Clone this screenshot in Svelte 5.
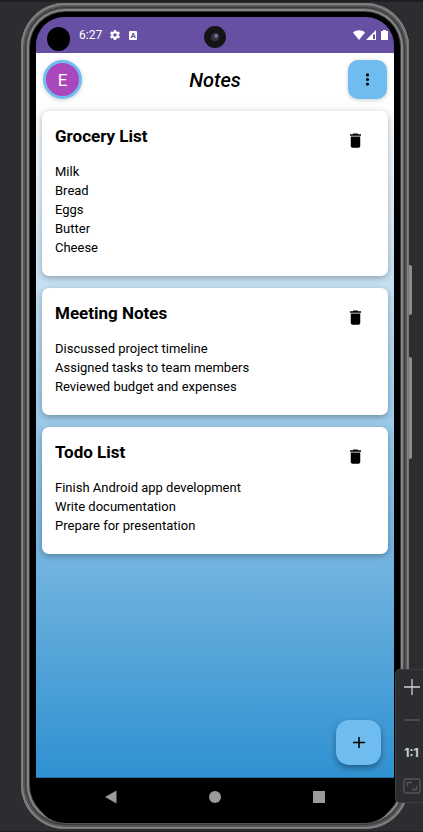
<script>
  let notes = $state([
    { title: 'Grocery List', lines: ['Milk', 'Bread', 'Eggs', 'Butter', 'Cheese'] },
    { title: 'Meeting Notes', lines: ['Discussed project timeline', 'Assigned tasks to team members', 'Reviewed budget and expenses'] },
    { title: 'Todo List', lines: ['Finish Android app development', 'Write documentation', 'Prepare for presentation'] }
  ]);

  function remove(index) {
    notes.splice(index, 1);
  }
</script>

<div class="stage">
  <div class="device">
    <span class="side power"></span>
    <span class="side volume"></span>
    <div class="screen">
      <div class="status">
        <span class="corner-lens"></span>
        <span class="time">6:27</span>
        <svg class="gear" viewBox="0 0 24 24" width="12" height="12" aria-hidden="true">
          <path fill="#fff" fill-rule="evenodd" d="M19.4 13a7.500 7.500 0 0 0 0-2l2.200-1.700a.5.5 0 0 0 .1-.6l-2-3.500a.5.5 0 0 0-.6-.2l-2.500 1a7.300 7.300 0 0 0-1.700-1L14.500 2.400A.5.5 0 0 0 14 2h-4a.5.5 0 0 0-.5.4L9.100 5a7.300 7.300 0 0 0-1.700 1l-2.500-1a.5.5 0 0 0-.6.2l-2 3.500a.5.5 0 0 0 .1.6L4.600 11a7.500 7.500 0 0 0 0 2l-2.200 1.700a.5.5 0 0 0-.1.600l2 3.500c.1.200.4.300.6.200l2.500-1a7.300 7.300 0 0 0 1.700 1l.4 2.600c0 .200.2.400.5.400h4c.2 0 .5-.2.5-.4l.4-2.600a7.300 7.300 0 0 0 1.700-1l2.500 1c.2.100.5 0 .6-.2l2-3.500a.5.5 0 0 0-.1-.6zM12 15.600a3.600 3.600 0 1 1 0-7.200 3.600 3.600 0 0 1 0 7.200z" />
        </svg>
        <span class="lang">A</span>
        <span class="camera"><span></span></span>
        <svg class="signals" viewBox="0 0 36 12" width="36" height="12" aria-hidden="true">
          <path fill="#fff" d="M0 3.500C3.200.4 8.800.4 12 3.500L6 11z" />
          <path fill="#fff" d="M23 1v10H13z" />
          <path fill="#6750a4" d="M20 5.500h2V10h-2z" />
          <path fill="#fff" d="M30 1h3v1h2v9h-7V2h2z" />
        </svg>
      </div>

      <div class="app">
        <header>
          <button class="avatar" aria-label="Account">E</button>
          <h1>Notes</h1>
          <button class="menu" aria-label="More options">
            <svg viewBox="0 0 24 24" width="17" height="17"><g fill="#000"><circle cx="12" cy="5.500" r="2.200" /><circle cx="12" cy="12" r="2.200" /><circle cx="12" cy="18.500" r="2.200" /></g></svg>
          </button>
        </header>

        <main>
          {#each notes as note, i}
            <article>
              <div class="text">
                <h2>{note.title}</h2>
                {#each note.lines as line}
                  <p>{line}</p>
                {/each}
              </div>
              <button class="delete" aria-label="Delete {note.title}" onclick={() => remove(i)}>
                <svg viewBox="0 0 24 24" width="19" height="19"><path d="M6 19c0 1.100.9 2 2 2h8c1.100 0 2-.9 2-2V7H6zM19 4h-3.500l-1-1h-5l-1 1H5v2h14z" /></svg>
              </button>
            </article>
          {/each}
        </main>

        <button class="add" aria-label="Add note">
          <svg viewBox="0 0 12 12" width="12" height="12"><path d="M6 0v11M0 5.500h12" stroke="#000" stroke-width="1.600" /></svg>
        </button>
      </div>

      <nav>
        <button aria-label="Back"><svg viewBox="0 0 14 14" width="14" height="14"><path fill="#9b9b9b" d="M12.500 .5v13L1 7z" /></svg></button>
        <button aria-label="Home"><svg viewBox="0 0 14 14" width="14" height="14"><circle cx="7" cy="7" r="6" fill="#9b9b9b" /></svg></button>
        <button aria-label="Overview"><svg viewBox="0 0 14 14" width="14" height="14"><path fill="#9b9b9b" d="M1 1h12v12H1z" /></svg></button>
      </nav>
    </div>
  </div>

  <aside>
    <button aria-label="Zoom in"><svg viewBox="0 0 16 16" width="16" height="16"><path d="M8 0v16M0 8h16" stroke="#ced0d6" stroke-width="1.300" /></svg></button>
    <button aria-label="Zoom out"><svg viewBox="0 0 16 16" width="16" height="16"><path d="M0 8h16" stroke="#5c5d60" stroke-width="1.300" /></svg></button>
    <button>1:1</button>
    <button aria-label="Fit to window"><svg viewBox="0 0 18 16" width="18" height="16" fill="none" stroke="#55565a" stroke-width="1.300"><rect x="1" y="1" width="16" height="14" rx="2" /><path d="M4.500 8V4.500H9M9 11.500h4.500V8" /></svg></button>
  </aside>
</div>

<style>
  :global(body) {
    margin: 0;
    background: #2b2d31;
  }

  .stage {
    position: relative;
    box-sizing: border-box;
    display: flex;
    min-height: 100vh;
    padding: 1px 14px 2px 21px;
    overflow: hidden;
    border-top: 2px solid #1e1f22;
    border-bottom: 1px solid #1e1f22;
    background: #2b2d31;
    font-family: Roboto, "Liberation Sans", sans-serif;
    color: #000;
  }

  button {
    display: grid;
    place-items: center;
    margin: 0;
    padding: 0;
    border: 0;
    background: none;
    color: inherit;
    font: inherit;
    cursor: pointer;
  }

  svg {
    display: block;
  }

  .device {
    position: relative;
    box-sizing: border-box;
    display: flex;
    flex: 1;
    padding: 14px 15px 6px;
    border-radius: 44px;
    background: #000;
    box-shadow:
      inset 0 0 0 1px #777,
      inset 0 0 0 2px #858585,
      inset 0 0 0 4px #555,
      inset 0 0 0 5px #3a3a3a,
      inset 0 0 0 6px #555,
      inset 0 0 0 8px #858585,
      inset 0 0 0 9px #383838;
  }

  .side {
    position: absolute;
    right: -3px;
    width: 3px;
    border-radius: 0 2px 2px 0;
    background: #8d8d8d;
  }

  .power {
    top: 262px;
    height: 50px;
  }

  .volume {
    top: 354px;
    height: 102px;
  }

  .screen {
    display: flex;
    flex: 1;
    flex-direction: column;
    min-width: 0;
    overflow: hidden;
    border-radius: 28px;
    background: #000;
  }

  .status {
    position: relative;
    box-sizing: border-box;
    display: flex;
    align-items: center;
    height: 36px;
    padding: 0 5px 0 43px;
    background: #6750a4;
    color: #fff;
    font-size: 12px;
  }

  .corner-lens {
    position: absolute;
    top: 10px;
    left: 11px;
    width: 23px;
    height: 24px;
    border-radius: 50%;
    background: #000;
  }

  .gear {
    margin: 0 8px 0 7px;
  }

  .lang {
    width: 8px;
    height: 9px;
    border-radius: 1px;
    background: #fff;
    color: #6750a4;
    font-size: 8px;
    font-weight: 700;
    line-height: 9px;
    text-align: center;
  }

  .camera {
    position: absolute;
    top: 9px;
    left: 50%;
    display: grid;
    place-items: center;
    width: 22px;
    height: 22px;
    margin-left: -11px;
    border-radius: 50%;
    background: #141416;
  }

  .camera span {
    width: 8px;
    height: 8px;
    border-radius: 50%;
    background: radial-gradient(circle at 65% 35%, #8d70a8 0 10%, #28303f 40%, #35414a 100%);
  }

  .signals {
    margin-left: auto;
  }

  .app {
    box-sizing: border-box;
    display: flex;
    flex: 1;
    flex-direction: column;
    padding: 7px 6px 12px;
    border-bottom: 1px solid #1f6ea5;
    background: linear-gradient(#fff, #fff 6%, #3091d1);
  }

  header {
    display: flex;
    align-items: center;
    justify-content: space-between;
    padding: 0 1px;
  }

  h1 {
    margin: 0;
    font-size: 20px;
    font-style: italic;
    font-weight: 500;
    line-height: 24px;
  }

  .avatar,
  .menu {
    box-sizing: border-box;
    width: 39px;
    height: 39px;
    box-shadow: 0 1px 4px rgb(0 0 0 / 20%);
  }

  .avatar {
    border: 3px solid #6fbdf0;
    border-radius: 50%;
    background: #aa47bc;
    color: #fff;
    font-size: 17px;
  }

  .menu {
    border-radius: 10px;
    background: #6fbdf0;
  }

  main {
    display: flex;
    flex-direction: column;
    gap: 12px;
    margin-top: 12px;
  }

  article {
    display: flex;
    align-items: flex-start;
    justify-content: space-between;
    padding: 13px 23px 19px 13px;
    border-radius: 7px;
    background: #fff;
    box-shadow: 0 2px 6px rgb(0 0 0 / 30%);
  }

  h2 {
    margin: 0 0 14px;
    font-size: 17px;
    font-weight: 700;
    line-height: 24px;
  }

  p {
    margin: 0;
    font-size: 13px;
    line-height: 19px;
  }

  .delete {
    width: 19px;
    height: 32px;
  }

  .add {
    align-self: flex-end;
    width: 45px;
    height: 45px;
    margin: auto 7px 0 0;
    border-radius: 13px;
    background: #6fbdf0;
    box-shadow: 0 3px 6px rgb(0 0 0 / 35%);
  }

  nav {
    display: flex;
    align-items: center;
    justify-content: center;
    gap: 90px;
    height: 38px;
    padding-bottom: 7px;
  }

  aside {
    position: absolute;
    right: 0;
    bottom: 28px;
    box-sizing: border-box;
    display: grid;
    grid-template-rows: repeat(4, 33px);
    width: 28px;
    padding-left: 4px;
    border: 1px solid #3d3e42;
    border-right: 0;
    border-radius: 5px 0 0 5px;
    background: #2b2d31;
    color: #ced0d6;
    font-family: Inter, sans-serif;
    font-size: 12px;
    font-weight: 700;
  }
</style>
